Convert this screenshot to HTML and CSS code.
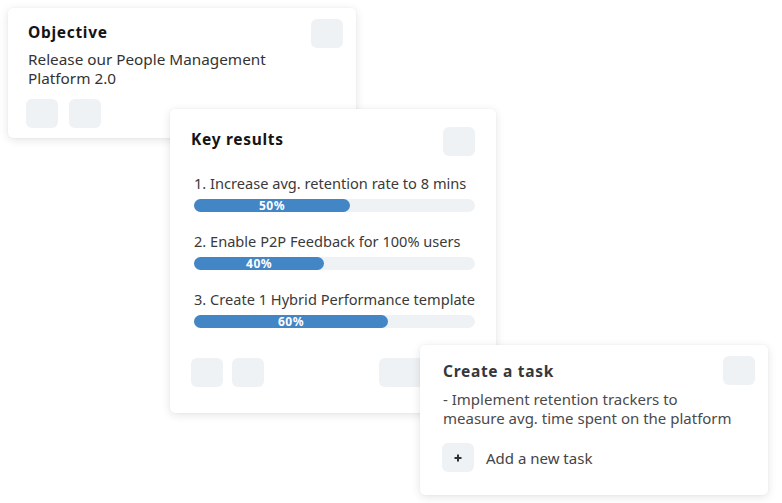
FILE: index.html
```html
<!DOCTYPE html>
<html lang="en">
<head>
<meta charset="utf-8">
<title>OKR cards</title>
<link rel="stylesheet" href="styles.css">
</head>
<body>
<div class="canvas">
  <section class="card card-objective">
    <div class="card-head">
      <h2 class="card-title">Objective</h2>
      <span class="chip"></span>
    </div>
    <p class="card-text">Release our People Management<br>Platform 2.0</p>
    <div class="card-foot card-foot-objective">
      <span class="chip"></span>
      <span class="chip"></span>
    </div>
  </section>

  <section class="card card-results">
    <div class="card-head">
      <h2 class="card-title title-results">Key results</h2>
      <span class="chip"></span>
    </div>
    <ul class="results">
      <li class="result">
        <span class="result-text">1. Increase avg. retention rate to 8 mins</span>
        <div class="track"><div class="fill" style="width:55.5%">50%</div></div>
      </li>
      <li class="result">
        <span class="result-text">2. Enable P2P Feedback for 100% users</span>
        <div class="track"><div class="fill" style="width:46.3%">40%</div></div>
      </li>
      <li class="result">
        <span class="result-text">3. Create 1 Hybrid Performance template</span>
        <div class="track"><div class="fill" style="width:69%">60%</div></div>
      </li>
    </ul>
    <div class="card-foot">
      <span class="chip"></span>
      <span class="chip"></span>
      <span class="chip chip-wide"></span>
    </div>
  </section>

  <section class="card card-task">
    <div class="card-head">
      <h2 class="card-title title-task">Create a task</h2>
      <span class="chip"></span>
    </div>
    <p class="card-text task-text">- Implement retention trackers to<br>measure avg. time spent on the platform</p>
    <div class="add-row">
      <span class="chip chip-plus">
        <svg width="10" height="10" viewBox="0 0 10 10" aria-hidden="true"><path d="M5 1.5v7M1.5 5h7" stroke="#2f3033" stroke-width="2" stroke-linecap="butt"/></svg>
      </span>
      <span class="add-label">Add a new task</span>
    </div>
  </section>
</div>
</body>
</html>
```
FILE: styles.css
```css
* { box-sizing: border-box; }

html, body {
  margin: 0;
  padding: 0;
  background: #ffffff;
}

body {
  font-family: "Noto Sans", "Open Sans", sans-serif;
  color: #333333;
}

.canvas {
  position: relative;
  width: 782px;
  height: 503px;
  overflow: hidden;
}

.card {
  position: absolute;
  background: #ffffff;
  border-radius: 5px;
  box-shadow: 0 2px 10px rgba(0, 0, 0, 0.11), 0 0 2px rgba(0, 0, 0, 0.05);
  display: flex;
  flex-direction: column;
}

.card-objective {
  left: 8px;
  top: 8px;
  width: 348px;
  height: 130px;
  padding: 11px 13px 0 20px;
  z-index: 1;
}

.card-results {
  left: 170px;
  top: 109px;
  width: 326px;
  height: 304px;
  padding: 18px 21px 0 21px;
  z-index: 2;
}

.card-task {
  left: 420px;
  top: 345px;
  width: 348px;
  height: 150px;
  padding: 11px 13px 0 23px;
  z-index: 3;
}

.card-head {
  display: flex;
  justify-content: space-between;
  align-items: flex-start;
}

.card-title {
  margin: 0;
  font-size: 15.5px;
  font-weight: 700;
  line-height: 26px;
  letter-spacing: 0.7px;
  color: #141414;
}

.title-results {
  line-height: 24px;
}

.title-task {
  margin-top: 2px;
  color: #36373b;
}

.chip {
  display: block;
  flex: none;
  width: 32px;
  height: 29px;
  border-radius: 6px;
  background: #eef2f5;
}

.card-text {
  margin: 2px 0 0;
  font-size: 15.3px;
  line-height: 19px;
  color: #333333;
}

.card-foot {
  display: flex;
  gap: 9px;
  margin-top: 30px;
}

.card-foot-objective {
  margin-top: 11px;
  margin-left: -2px;
  gap: 11px;
}

.chip-wide {
  width: 96px;
  margin-left: auto;
}

.results {
  list-style: none;
  margin: 18px 0 0 3px;
  padding: 0;
  display: flex;
  flex-direction: column;
  gap: 20px;
}

.result {
  display: flex;
  flex-direction: column;
  gap: 7px;
}

.result-text {
  font-size: 14.6px;
  line-height: 18px;
  color: #3a3a3a;
  white-space: nowrap;
}

.track {
  height: 13px;
  border-radius: 7px;
  background: #eff2f5;
}

.fill {
  height: 13px;
  border-radius: 7px;
  background: #4286c6;
  color: #ffffff;
  font-size: 12px;
  font-weight: 700;
  line-height: 13px;
  letter-spacing: 0.5px;
  text-align: center;
}

.task-text {
  margin-top: 5px;
  font-size: 15px;
  line-height: 19px;
  color: #4a4a4a;
}

.add-row {
  display: flex;
  align-items: center;
  gap: 12px;
  margin-top: 15px;
  margin-left: -1px;
}

.chip-plus {
  display: flex;
  align-items: center;
  justify-content: center;
}

.add-label {
  font-size: 15px;
  line-height: 18px;
  color: #444444;
}
```
